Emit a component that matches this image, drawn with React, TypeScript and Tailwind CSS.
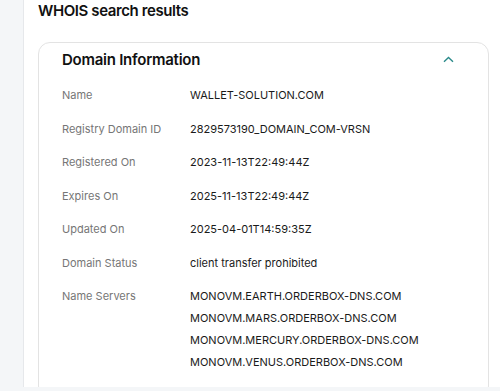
import React from "react";

const rows: [string, string[]][] = [
  ["Name", ["WALLET-SOLUTION.COM"]],
  ["Registry Domain ID", ["2829573190_DOMAIN_COM-VRSN"]],
  ["Registered On", ["2023-11-13T22:49:44Z"]],
  ["Expires On", ["2025-11-13T22:49:44Z"]],
  ["Updated On", ["2025-04-01T14:59:35Z"]],
  ["Domain Status", ["client transfer prohibited"]],
  [
    "Name Servers",
    [
      "MONOVM.EARTH.ORDERBOX-DNS.COM",
      "MONOVM.MARS.ORDERBOX-DNS.COM",
      "MONOVM.MERCURY.ORDERBOX-DNS.COM",
      "MONOVM.VENUS.ORDERBOX-DNS.COM",
    ],
  ],
];

export default function App() {
  return (
    <div
      className="w-[500px] h-[391px] bg-[#f4f6f8] overflow-hidden"
      style={{ fontFamily: "Inter, 'Liberation Sans', sans-serif" }}
    >
      <div className="ml-[23px] h-[387px] bg-white border-l border-[#e6e8eb] pl-[14px] pr-[11px] overflow-hidden">
        <h1 className="h-[21px] leading-[21px] text-[15px] tracking-[-0.4px] font-semibold text-[#111]">
          WHOIS search results
        </h1>
        <div className="mt-[21px] border border-[#e3e3e3] rounded-[12px] pl-[23px] pr-[34px] pb-6">
          <div className="flex items-center justify-between pt-[6px] h-[27px]">
            <div className="leading-[20px] text-[15px] tracking-[-0.25px] font-semibold text-[#111]">
              Domain Information
            </div>
            <svg width="11" height="7" viewBox="0 0 11 7" className="-mt-[1px]">
              <path d="M1 5.8 L5.5 1.5 L10 5.8" fill="none" stroke="#2a8a8a" strokeWidth="1.4" />
            </svg>
          </div>
          <div className="mt-[14px] flex flex-col gap-y-[11.5px] text-[11px] leading-[22px]">
            {rows.map(([label, values]) => (
              <div key={label} className="flex">
                <div className="w-[128px] shrink-0 text-[#767676]">{label}</div>
                <div className="flex flex-col text-[#1a1a1a]">
                  {values.map((v) => (
                    <div key={v}>{v}</div>
                  ))}
                </div>
              </div>
            ))}
          </div>
        </div>
      </div>
    </div>
  );
}
